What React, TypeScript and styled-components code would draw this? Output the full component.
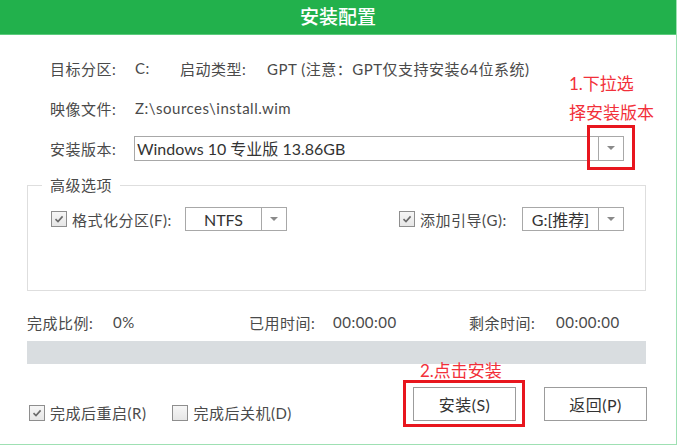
import React from "react";
import styled, { createGlobalStyle } from "styled-components";

const GlobalStyle = createGlobalStyle`
  html, body { margin: 0; padding: 0; background: #fff; }
  body {
    font-family: Lato, "Noto Sans CJK SC", sans-serif;
    color: #4a4a4a;
    letter-spacing: 0.5px;
  }
  * { box-sizing: border-box; }
`;

const Window = styled.div`
  position: relative;
  width: 677px;
  height: 445px;
  border-right: 1px solid #9fe0b3;
  border-bottom: 1px solid #9fe0b3;
  background: #fff;
  display: flex;
  flex-direction: column;
`;

const TitleBar = styled.header`
  flex: none;
  height: 35px;
  padding-bottom: 4px;
  background: #22b14c;
  border-bottom: 1px solid #5ccb7d;
  color: #fff;
  font-size: 19px;
  font-weight: 500;
  letter-spacing: 0;
  display: flex;
  align-items: center;
  justify-content: center;
`;

const Body = styled.main`
  flex: 1;
  padding: 13px 30px 0 27px;
  display: flex;
  flex-direction: column;
`;

const InfoRow = styled.div`
  height: 40px;
  padding-left: 23px;
  display: flex;
  align-items: center;
  font-size: 15px;
  white-space: nowrap;
`;

const Cell = styled.span<{ $w?: number }>`
  flex: none;
  width: ${(p) => (p.$w ? `${p.$w}px` : "auto")};
`;

const Select = styled.div<{ $w: number; $h: number }>`
  flex: none;
  width: ${(p) => p.$w}px;
  height: ${(p) => p.$h}px;
  border: 1px solid #a8a8a8;
  background: #fff;
  display: flex;
  align-items: stretch;
`;

const SelectText = styled.span<{ $size: number; $center?: boolean }>`
  flex: 1;
  display: flex;
  align-items: center;
  justify-content: ${(p) => (p.$center ? "center" : "flex-start")};
  padding-left: ${(p) => (p.$center ? 0 : 2)}px;
  font-size: ${(p) => p.$size}px;
  letter-spacing: 0;
  color: #333;
  white-space: nowrap;
  overflow: hidden;
`;

const SelectButton = styled.span`
  flex: none;
  width: 25px;
  border-left: 1px solid #a8a8a8;
  display: flex;
  align-items: center;
  justify-content: center;
  &::after {
    content: "";
    border-left: 4px solid transparent;
    border-right: 4px solid transparent;
    border-top: 4px solid #8a8a8a;
  }
`;

const Group = styled.fieldset`
  margin: 7px 0 0;
  padding: 0 0 0 14px;
  height: 116px;
  border: 1px solid #dedede;
  min-width: 0;
`;

const Legend = styled.legend`
  padding: 0 8px;
  font-size: 15px;
  line-height: 20px;
  color: #4a4a4a;
`;

const OptionsRow = styled.div`
  margin: 12px 21px 0 9px;
  height: 24px;
  display: flex;
  align-items: center;
  justify-content: space-between;
`;

const OptionItem = styled.div`
  display: flex;
  align-items: center;
  font-size: 15px;
  white-space: nowrap;
`;

const CheckLabel = styled.label`
  display: flex;
  align-items: center;
  gap: 5px;
  font-size: 15px;
  color: #4a4a4a;
  white-space: nowrap;
`;

const Box = styled.span`
  flex: none;
  width: 16px;
  height: 16px;
  border: 1px solid #8e8e8e;
  background: linear-gradient(#f6f6f6, #e6e6e6);
  display: flex;
  align-items: center;
  justify-content: center;
`;

const ProgressInfo = styled.div`
  margin-top: 16px;
  height: 30px;
  display: grid;
  grid-template-columns: 222px 220px 1fr;
  align-items: center;
  font-size: 15px;
  white-space: nowrap;
`;

const Stat = styled.div`
  display: flex;
  align-items: center;
`;

const ProgressTrack = styled.div`
  margin-top: 4px;
  height: 23px;
  background: #d9dde0;
`;

const Footer = styled.div`
  margin-top: 23px;
  display: flex;
  align-items: flex-start;
`;

const FooterChecks = styled.div`
  flex: 1;
  padding: 15px 0 0 2px;
  display: flex;
  gap: 26px;
`;

const Buttons = styled.div`
  display: flex;
  gap: 28px;
  margin-right: -1px;
`;

const Button = styled.button`
  width: 103px;
  height: 34px;
  border: 1px solid #9c9c9c;
  background: #fff;
  color: #333;
  font-family: inherit;
  font-size: 16px;
  letter-spacing: 0.5px;
  padding: 0;
  cursor: pointer;
`;

const Note = styled.div<{ $x: number; $y: number }>`
  position: absolute;
  left: ${(p) => p.$x}px;
  top: ${(p) => p.$y}px;
  color: #f2303a;
  font-size: 17px;
  line-height: 29px;
  letter-spacing: 0;
  white-space: nowrap;
`;

const Highlight = styled.div<{ $x: number; $y: number; $w: number; $h: number }>`
  position: absolute;
  left: ${(p) => p.$x}px;
  top: ${(p) => p.$y}px;
  width: ${(p) => p.$w}px;
  height: ${(p) => p.$h}px;
  border: 3px solid #e8161e;
  pointer-events: none;
`;

function Check({ on, label }: { on: boolean; label: string }) {
  return (
    <CheckLabel>
      <Box>
        {on && (
          <svg width="10" height="10" viewBox="0 0 10 10">
            <path d="M1.5 5.2 L4 7.6 L8.6 2.4" fill="none" stroke="#6a6a6a" strokeWidth="1.6" />
          </svg>
        )}
      </Box>
      {label}
    </CheckLabel>
  );
}

export default function App() {
  return (
    <>
      <GlobalStyle />
      <Window>
        <TitleBar>安装配置</TitleBar>
        <Body>
          <InfoRow>
            <Cell $w={85}>目标分区:</Cell>
            <Cell $w={45}>C:</Cell>
            <Cell $w={87}>启动类型:</Cell>
            <Cell>GPT (注意：GPT仅支持安装64位系统)</Cell>
          </InfoRow>
          <InfoRow>
            <Cell $w={85}>映像文件:</Cell>
            <Cell>Z:\sources\install.wim</Cell>
          </InfoRow>
          <InfoRow>
            <Cell $w={84}>安装版本:</Cell>
            <Select $w={490} $h={25}>
              <SelectText $size={16}>Windows 10 专业版 13.86GB</SelectText>
              <SelectButton />
            </Select>
          </InfoRow>

          <Group>
            <Legend>高级选项</Legend>
            <OptionsRow>
              <OptionItem>
                <Cell $w={134}>
                  <Check on label="格式化分区(F):" />
                </Cell>
                <Select $w={102} $h={24}>
                  <SelectText $size={16} $center>NTFS</SelectText>
                  <SelectButton />
                </Select>
              </OptionItem>
              <OptionItem>
                <Cell $w={123}>
                  <Check on label="添加引导(G):" />
                </Cell>
                <Select $w={102} $h={24}>
                  <SelectText $size={16} $center>G:[推荐]</SelectText>
                  <SelectButton />
                </Select>
              </OptionItem>
            </OptionsRow>
          </Group>

          <ProgressInfo>
            <Stat>
              <Cell $w={86}>完成比例:</Cell>
              <Cell>0%</Cell>
            </Stat>
            <Stat>
              <Cell $w={84}>已用时间:</Cell>
              <Cell>00:00:00</Cell>
            </Stat>
            <Stat>
              <Cell $w={87}>剩余时间:</Cell>
              <Cell>00:00:00</Cell>
            </Stat>
          </ProgressInfo>
          <ProgressTrack />

          <Footer>
            <FooterChecks>
              <Check on label="完成后重启(R)" />
              <Check on={false} label="完成后关机(D)" />
            </FooterChecks>
            <Buttons>
              <Button>安装(S)</Button>
              <Button>返回(P)</Button>
            </Buttons>
          </Footer>
        </Body>

        <Note $x={569} $y={69}>1.下拉选</Note>
        <Note $x={569} $y={98}>择安装版本</Note>
        <Highlight $x={587} $y={125} $w={48} $h={45} />
        <Note $x={420} $y={356}>2.点击安装</Note>
        <Highlight $x={403} $y={380} $w={122} $h={47} />
      </Window>
    </>
  );
}
